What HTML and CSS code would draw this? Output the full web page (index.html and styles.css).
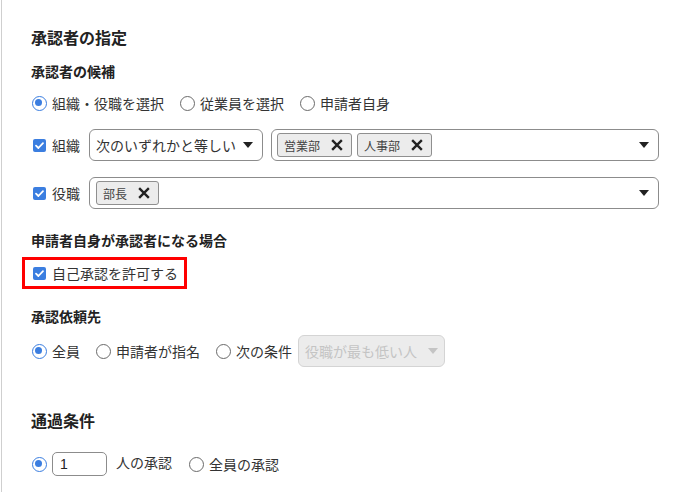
FILE: index.html
```html
<!DOCTYPE html>
<html lang="ja">
<head>
<meta charset="utf-8">
<link rel="stylesheet" href="styles.css">
</head>
<body>
<div class="panel">
  <h1 class="title t1">承認者の指定</h1>
  <h2 class="sub s1">承認者の候補</h2>
  <div class="radios r1">
    <label class="opt"><span class="radio on"></span>組織・役職を選択</label>
    <label class="opt"><span class="radio"></span>従業員を選択</label>
    <label class="opt"><span class="radio"></span>申請者自身</label>
  </div>

  <div class="frow f1">
    <label class="chk-label"><span class="check"><svg viewBox="0 0 13 13"><path d="M3 6.6 L5.4 9 L10 4.2" fill="none" stroke="#fff" stroke-width="1.8" stroke-linecap="round" stroke-linejoin="round"/></svg></span>組織</label>
    <div class="select cond">次のいずれかと等しい<span class="caret"></span></div>
    <div class="select multi">
      <span class="tag">営業部<span class="x"><svg viewBox="0 0 13 13"><path d="M2 2 L11 11 M11 2 L2 11" stroke="#222" stroke-width="2.2"/></svg></span></span>
      <span class="tag">人事部<span class="x"><svg viewBox="0 0 13 13"><path d="M2 2 L11 11 M11 2 L2 11" stroke="#222" stroke-width="2.2"/></svg></span></span>
      <span class="caret push"></span>
    </div>
  </div>

  <div class="frow f2">
    <label class="chk-label"><span class="check"><svg viewBox="0 0 13 13"><path d="M3 6.6 L5.4 9 L10 4.2" fill="none" stroke="#fff" stroke-width="1.8" stroke-linecap="round" stroke-linejoin="round"/></svg></span>役職</label>
    <div class="select multi wide">
      <span class="tag">部長<span class="x"><svg viewBox="0 0 13 13"><path d="M2 2 L11 11 M11 2 L2 11" stroke="#222" stroke-width="2.2"/></svg></span></span>
      <span class="caret push"></span>
    </div>
  </div>

  <h2 class="sub s2">申請者自身が承認者になる場合</h2>
  <label class="self"><span class="check"><svg viewBox="0 0 13 13"><path d="M3 6.6 L5.4 9 L10 4.2" fill="none" stroke="#fff" stroke-width="1.8" stroke-linecap="round" stroke-linejoin="round"/></svg></span>自己承認を許可する</label>

  <h2 class="sub s3">承認依頼先</h2>
  <div class="radios r2">
    <label class="opt"><span class="radio on"></span>全員</label>
    <label class="opt"><span class="radio"></span>申請者が指名</label>
    <label class="opt tight"><span class="radio"></span>次の条件</label>
    <div class="select disabled">役職が最も低い人<span class="caret"></span></div>
  </div>

  <h1 class="title t2">通過条件</h1>
  <div class="radios r3">
    <label class="opt num"><span class="radio on"></span><span class="numbox">1</span><span class="unit">人の承認</span></label>
    <label class="opt"><span class="radio"></span>全員の承認</label>
  </div>
</div>
</body>
</html>
```

FILE: styles.css
```css
* { box-sizing: border-box; }
html, body { margin: 0; padding: 0; background: #fff; }
body {
  font-family: "Noto Sans CJK JP", "Noto Sans", sans-serif;
  color: #333;
  font-size: 14px;
}
.panel {
  margin-left: 1px;
  border-left: 1px solid #cfcfcf;
  height: 492px;
  padding: 25px 14px 0 29px;
}
.title {
  font-size: 16px;
  font-weight: 700;
  line-height: 24px;
  margin: 0;
  color: #222;
}
.sub {
  font-size: 14px;
  font-weight: 700;
  line-height: 20px;
  margin: 0;
  color: #222;
}
.s1 { margin-top: 12px; }
.radios { display: flex; align-items: center; height: 24px; }
.r1 { margin-top: 10px; }
.opt {
  display: inline-flex;
  align-items: center;
  line-height: 20px;
  margin-right: 15px;
  margin-left: 1px;
}
.opt:first-child { margin-left: 1px; }
.radio {
  width: 15px; height: 15px;
  border: 1.7px solid #6a6a6a;
  border-radius: 50%;
  margin-right: 5px;
  display: inline-block;
  position: relative;
  flex: none;
}
.radio.on { border-color: #3b7ee0; }
.radio.on::after {
  content: "";
  position: absolute;
  left: 2.3px; top: 2.3px;
  width: 7px; height: 7px;
  border-radius: 50%;
  background: #3b7ee0;
}
.frow { display: flex; align-items: center; }
.f1 { margin-top: 14px; height: 32px; }
.f2 { margin-top: 16px; height: 32px; }
.chk-label {
  display: inline-flex; align-items: center;
  width: 56px; margin-left: 2px;
}
.check {
  width: 13px; height: 13px;
  background: #3b7ee0;
  border-radius: 2px;
  margin-right: 6px;
  display: inline-flex;
  flex: none;
}
.check svg { width: 13px; height: 13px; }
.select {
  display: flex; align-items: center;
  height: 32px;
  border: 1px solid #8c8c8c;
  border-radius: 6px;
  background: #fff;
}
.cond { width: 174px; padding-left: 6px; color: #333; }
.cond .caret { margin-left: 7px; }
.multi { flex: 1; margin-left: 8px; padding: 0 9px 0 5px; gap: 5px; }
.wide { margin-left: 0; padding-left: 6px; }
.caret {
  width: 0; height: 0;
  border-left: 5px solid transparent;
  border-right: 5px solid transparent;
  border-top: 6px solid #222;
  display: inline-block;
}
.push { margin-left: auto; }
.tag {
  display: inline-flex; align-items: center;
  height: 24px;
  padding: 0 7px 0 6px;
  background: #ececec;
  border: 1px solid #8f8f8f;
  border-radius: 3px;
  font-size: 12px;
  color: #444;
}
.x { display: inline-flex; margin-left: 10px; }
.x svg { width: 14px; height: 14px; }
.s2 { margin-top: 21px; }
.self {
  display: inline-flex; align-items: center;
  margin-top: 7px;
  margin-left: -9px;
  height: 32px;
  border: 3px solid #ff0000;
  padding: 0 6px 0 8px;
}
.s3 { margin-top: 17px; }
.r2 { margin-top: 9px; height: 32px; }
.opt.tight { margin-right: 6px; }
.disabled {
  width: 147px;
  background: #ececec;
  border-color: #d4d4d4;
  color: #c4c4c4;
  padding-left: 6px;
}
.disabled .caret { border-top-color: #c4c4c4; margin-left: 11px; }
.t2 { margin-top: 41px; }
.r3 { margin-top: 20px; }
.num { margin-right: 16px; }
.numbox {
  display: inline-flex; align-items: center;
  width: 55px; height: 24px;
  border: 1px solid #8c8c8c;
  border-radius: 5px;
  padding-left: 7px;
  font-family: "Liberation Sans", sans-serif;
  font-size: 14px;
  color: #222;
  margin-right: 9px;
}
.unit { position: relative; top: -2px; }
```
